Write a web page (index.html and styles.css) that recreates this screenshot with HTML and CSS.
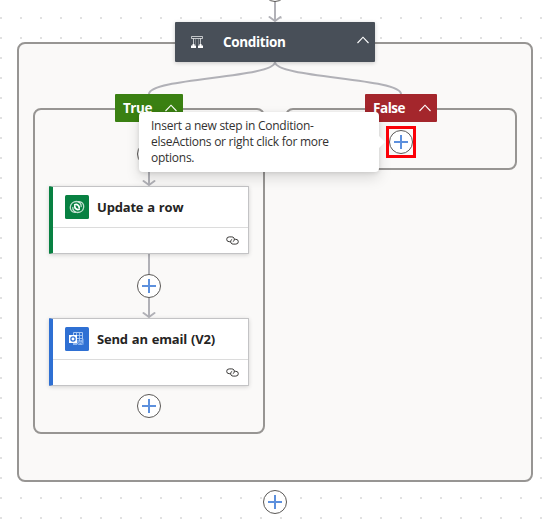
FILE: index.html
```
<!DOCTYPE html>
<html lang="en">

<head>
  <meta charset="UTF-8">
  <meta name="viewport" content="width=device-width, initial-scale=1.0">
  <title>Workflow designer</title>
  <link rel="stylesheet" href="styles.css">
</head>

<body>
  <svg width="0" height="0" class="symbols">
    <symbol id="chevron" viewBox="0 0 12 8">
      <path d="M.5 7 6 1.2 11.5 7" fill="none" stroke="#fff" stroke-width="1.1" />
    </symbol>
    <symbol id="plus" viewBox="0 0 14 14">
      <path d="M0 7h14M7 0v14" fill="none" stroke="#3474d4" stroke-opacity=".8" stroke-width="2" />
    </symbol>
    <symbol id="link" viewBox="0 0 13 9">
      <g fill="none" stroke="#3b3a39" stroke-width="1">
        <path d="M4.4 5.700H3.200A2.500 2.400 0 0 1 3.200 .9H5.800A2.500 2.400 0 0 1 8.200 4.200Q7.800 5.400 6.800 5.700" />
        <path d="M8.600 3.300H9.800A2.500 2.400 0 0 1 9.800 8.100H7.200A2.500 2.400 0 0 1 4.800 4.800Q5.200 3.600 6.200 3.300" />
      </g>
    </symbol>
  </svg>

  <main class="canvas">
    <section class="scope scope-condition"></section>
    <section class="scope scope-true"></section>
    <section class="scope scope-false"></section>

    <svg class="edges" width="550" height="526">
      <path d="M275 0V21M269.500 17 275 21 280.500 17" />
      <path d="M275 62C275 78 149 78 149 94" />
      <path d="M275 62C275 78 401 78 401 94" />
      <path d="M149 122V185M143.500 181 149 185 154.500 181" />
      <path d="M149 254V317M143.500 313 149 317 154.500 313" />
    </svg>

    <header class="node condition">
      <svg class="condition-icon" width="12" height="12" viewBox="0 0 12 12">
        <path d="M.5 .5h11v2H.5zM2.500 2.500v6M9.500 2.500v6" fill="none" stroke="#fff" stroke-width=".9" stroke-opacity=".75" />
        <path d="M4.500 3v6M7.500 3v6" fill="none" stroke="#fff" stroke-width=".8" stroke-opacity=".35" />
        <path d="M0 9.500h5V12H0zM7 9.500h5V12H7zM1.500 8h2v2h-2zM8.500 8h2v2h-2z" fill="#fff" />
      </svg>
      <span class="condition-name">Condition</span>
      <svg class="chevron" width="12" height="8"><use href="#chevron" /></svg>
    </header>

    <div class="node tag tag-true">
      <span>True</span>
      <svg class="chevron" width="12" height="8"><use href="#chevron" /></svg>
    </div>
    <div class="node tag tag-false">
      <span>False</span>
      <svg class="chevron" width="12" height="8"><use href="#chevron" /></svg>
    </div>

    <article class="node card card-update">
      <div class="card-header">
        <svg width="24" height="24" viewBox="0 0 24 24">
          <rect width="24" height="24" rx="1.500" fill="#088142" />
          <g fill="none" stroke="#fff" stroke-linecap="round">
            <path d="M10.500 17.200C7 17.500 5 15 5.300 12 5.600 8.500 8.500 6.500 11.500 6.500c3 0 5 2.500 4.700 5" stroke-width="1.300" stroke-opacity=".75" />
            <path d="M13.500 6.800C17 6.500 19 9 18.700 12c-.3 3.500-3.200 5.500-6.200 5.500-3 0-5-2.500-4.700-5" stroke-width="1.300" stroke-opacity=".75" />
            <path d="M9.800 9.800c2-1 4.400.5 4.400 2.700M14.200 14.200c-2 1-4.400-.5-4.400-2.700" stroke-width="1.800" />
          </g>
        </svg>
        <h2>Update a row</h2>
      </div>
      <div class="card-footer">
        <svg width="13" height="9"><use href="#link" /></svg>
      </div>
    </article>

    <article class="node card card-email">
      <div class="card-header">
        <svg width="24" height="24" viewBox="0 0 24 24">
          <rect width="24" height="24" rx="1.500" fill="#2f70d3" />
          <path d="M8.500 5.500h9V14h-9z" fill="none" stroke="#a9c8f3" stroke-width="1" />
          <path d="M8.500 8.500h9M8.500 11.500h9M11.500 5.500V14M14.500 5.500V14" stroke="#a9c8f3" stroke-width=".9" />
          <path d="M8 14l5 1.500 5.500-4V18H8z" fill="#8db5ee" />
          <path d="M12 18l3.500-3 3 3" fill="none" stroke="#2f70d3" stroke-width=".8" />
          <rect x="4" y="8" width="8" height="8" fill="#fff" />
          <circle cx="8" cy="12" r="2.100" fill="none" stroke="#2f70d3" stroke-width="1.300" />
        </svg>
        <h2>Send an email (V2)</h2>
      </div>
      <div class="card-footer">
        <svg width="13" height="9"><use href="#link" /></svg>
      </div>
    </article>

    <button class="node add add-top"><svg width="14" height="14"><use href="#plus" /></svg></button>
    <button class="node add add-true-first"><svg width="14" height="14"><use href="#plus" /></svg></button>
    <button class="node add add-true-middle"><svg width="14" height="14"><use href="#plus" /></svg></button>
    <button class="node add add-true-last"><svg width="14" height="14"><use href="#plus" /></svg></button>
    <button class="node add add-bottom"><svg width="14" height="14"><use href="#plus" /></svg></button>

    <div class="node tooltip">
      Insert a new step in Condition-<br>
      elseActions or right click for more<br>
      options.
    </div>

    <div class="node highlight">
      <button class="add"><svg width="14" height="14"><use href="#plus" /></svg></button>
    </div>
  </main>
</body>

</html>
```
FILE: styles.css
```
* {
  box-sizing: border-box;
}

body {
  margin: 0;
  font-family: "Open Sans", "Noto Sans", sans-serif;
  background-color: white;
}

.symbols {
  position: absolute;
}

/* dotted canvas, one dot every 20px */
.canvas {
  position: relative;
  width: 550px;
  height: 526px;
  overflow: hidden;
  background-image: conic-gradient(from 270deg at 2px 2px, #e1e1e1 90deg, transparent 0);
  background-size: 20px 20px;
  background-position: 0 17px;
}

/* scopes */
.scope {
  position: absolute;
  border: 2px solid #979593;
  border-radius: 8px;
  background: #faf9f8;
}

.scope-condition {
  left: 17px;
  top: 42px;
  width: 516px;
  height: 440px;
}

.scope-true {
  left: 33px;
  top: 108px;
  width: 232px;
  height: 326px;
}

.scope-false {
  left: 285px;
  top: 108px;
  width: 232px;
  height: 62px;
}

.edges {
  position: absolute;
  left: 0;
  top: 0;
  fill: none;
  stroke: #b1b1b7;
  stroke-width: 2;
  stroke-linecap: round;
  stroke-linejoin: round;
}

.node {
  position: absolute;
}

/* headers */
.condition {
  left: 175px;
  top: 22px;
  width: 200px;
  height: 40px;
  padding: 0 6px 0 16px;
  display: flex;
  align-items: center;
  color: white;
  background: #484f58;
  border-radius: 1px;
  box-shadow: 0 1px 4px rgba(0, 0, 0, .2);
  font-size: 13.5px;
  font-weight: 700;
}

.condition-name {
  margin-left: 20px;
  margin-top: -1px;
  letter-spacing: -.35px;
}

.condition .chevron {
  margin-left: auto;
  margin-top: -5px;
}

.tag {
  top: 94px;
  height: 28px;
  padding: 0 6px 0 8px;
  display: flex;
  align-items: center;
  justify-content: space-between;
  color: white;
  border-radius: 1px;
  font-size: 13.5px;
  font-weight: 700;
  letter-spacing: -.45px;
}

.tag-true {
  left: 115px;
  width: 68px;
  background: #3a8012;
}

.tag-false {
  left: 365px;
  width: 72px;
  background: #a4262c;
}

/* action cards */
.card {
  left: 49px;
  width: 200px;
  height: 68px;
  background: white;
  border: 1px solid #c3c3c5;
  border-left: 4px solid;
  border-radius: 1px;
  box-shadow: 0 1px 4px rgba(0, 0, 0, .16);
}

.card-update {
  top: 186px;
  border-left-color: #088142;
}

.card-email {
  top: 318px;
  border-left-color: #2f70d3;
}

.card-header {
  display: flex;
  align-items: center;
  gap: 8px;
  height: 41px;
  padding-left: 12px;
  border-bottom: 1px solid #dcdcdc;
}

.card h2 {
  margin: 0;
  color: #252423;
  font-size: 13px;
  font-weight: 700;
  letter-spacing: -.18px;
  word-spacing: .7px;
}

.card-footer {
  display: flex;
  justify-content: flex-end;
  padding: 8px 9px 0 0;
}

/* add buttons */
.add {
  display: flex;
  align-items: center;
  justify-content: center;
  width: 24px;
  height: 24px;
  padding: 0;
  border: 1px solid #5a5856;
  border-radius: 50%;
  background: white;
}

.add-top {
  left: 263px;
  top: -22px;
}

.add-true-first {
  left: 137px;
  top: 142px;
}

.add-true-middle {
  left: 137px;
  top: 274px;
}

.add-true-last {
  left: 137px;
  top: 394px;
}

.add-bottom {
  left: 263px;
  top: 490px;
}

.highlight {
  left: 386px;
  top: 126px;
  width: 30px;
  height: 32px;
  display: flex;
  align-items: center;
  justify-content: center;
  border: 3px solid #fb0007;
}

.tooltip {
  left: 139px;
  top: 112px;
  width: 240px;
  height: 60px;
  padding: 6px 12px;
  color: #323130;
  background: white;
  border-radius: 4px;
  box-shadow: 0 6px 14px rgba(0, 0, 0, .13), 0 1px 4px rgba(0, 0, 0, .11);
  font-size: 12px;
  line-height: 16px;
  letter-spacing: -.26px;
  white-space: nowrap;
}

.tooltip::after {
  content: "";
  position: absolute;
  left: 100%;
  top: 24px;
  border: 6px solid transparent;
  border-left-color: white;
  border-right: none;
}
```
